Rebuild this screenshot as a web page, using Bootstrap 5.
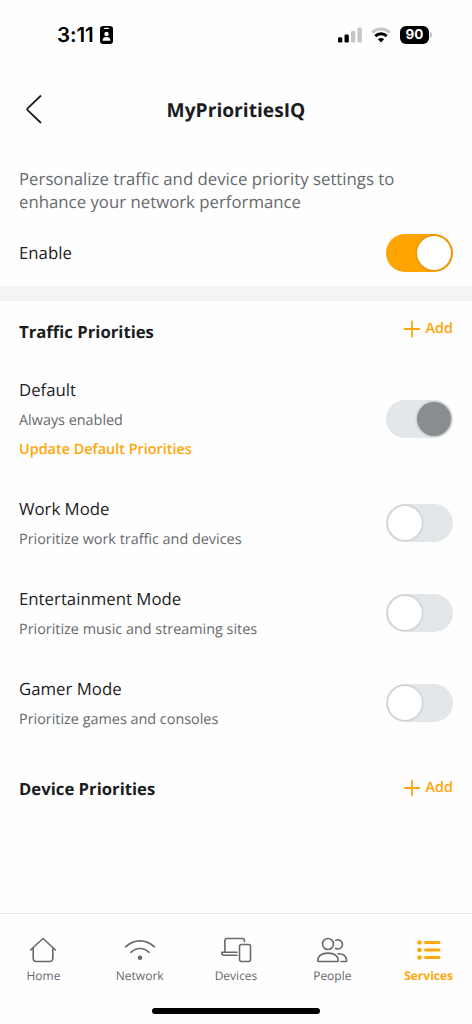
<!DOCTYPE html>
<html lang="en">
<head>
<meta charset="utf-8">
<meta name="viewport" content="width=device-width, initial-scale=1">
<title>MyPrioritiesIQ</title>
<link href="https://cdn.jsdelivr.net/npm/bootstrap@5.3.0/dist/css/bootstrap.min.css" rel="stylesheet">
<style>
  body { font-family: "Open Sans", sans-serif; background: #fefefe; color: #1b1c1e; text-rendering: geometricPrecision; }
  .screen { height: 1024px; overflow: hidden; }
  .status { height: 70px; padding: 0 40px 0 57px; }
  .clock { font: 600 20.5px/24px Inter, sans-serif; color: #000; letter-spacing: -.1px; }
  .id-icon { margin-left: 6px; }
  .battery { width: 29px; height: 18px; border-radius: 6px; background: #000; color: #fff; font: 700 13.5px/18px Inter, sans-serif; }
  .battery-tip { width: 2px; height: 6px; border-radius: 0 2px 2px 0; background: #c6c6c8; margin-left: 1px; }
  .title-bar { height: 78px; display: grid; grid-template-columns: 52px 1fr 52px; }
  .title-bar h1 { font-size: 19.2px; font-weight: 700; line-height: 26px; padding-top: 1px; }
  .intro { padding: 19px 19px 0; font-size: 16.8px; line-height: 23px; color: #66696d; height: 72px; }
  .line { padding: 0 19px; }
  .enable-line { height: 66px; }
  .label-text { font-size: 16.8px; line-height: 24px; }
  .note { font-size: 14.4px; line-height: 20px; color: #66696d; margin-top: 9px; }
  .accent { color: #ffa60a; }
  .update { font-size: 14.4px; line-height: 20px; font-weight: 600; text-decoration: none; margin-top: 9px; }
  .divider { height: 15px; background: #f3f4f6; }
  .section-head { height: 61px; }
  .section-head h2 { font-size: 16.7px; line-height: 24px; font-weight: 700; padding-top: 1px; }
  .add { font-size: 14.4px; line-height: 20px; font-weight: 600; gap: 5px; padding-bottom: 5px; }
  .toggle { appearance: none; width: 67px; height: 38px; border-radius: 19px; background: #e3e7ea; margin: 0; padding: 2px; display: flex; flex: none; }
  .toggle::before { content: ""; width: 34px; height: 34px; border-radius: 50%; background: #fff; box-shadow: 0 0 2px 1px rgba(0,0,0,.14); }
  .toggle:checked { background: #ffa400; justify-content: flex-end; }
  .toggle:disabled { background: #e3e7ea; }
  .toggle:disabled::before { background: #898d8f; }
  .default-item { height: 118px; padding-top: 16px; }
  .default-item .toggle { margin-top: 22px; }
  .mode-item { height: 90px; padding-top: 17px; }
  .mode-item .toggle { margin-top: 7px; }
  .tabs { height: 111px; border-top: 1px solid #e3e4e6; padding: 20px 0 10px; }
  .tab { width: 96.3px; font-size: 12px; line-height: 18px; }
  .tab-muted { color: #66696d; }
  .tab svg { display: block; margin-bottom: 1px; }
  .home-bar { width: 168px; height: 6px; border-radius: 3px; background: #000; }
</style>
</head>
<body>
<div class="screen d-flex flex-column">
  <div class="status d-flex align-items-center justify-content-between">
    <div class="d-flex align-items-center">
      <span class="clock">3:11</span>
      <svg class="id-icon" width="13" height="18" viewBox="0 0 13 18"><rect width="13" height="18" rx="3"/><rect x="4" y="1.7" width="5" height="1.4" rx=".7" fill="#fff"/><circle cx="6.5" cy="8" r="2.2" fill="#fff"/><path d="M2.6 14.7c0-2.8 1.5-3.8 3.9-3.8s3.9 1 3.9 3.8z" fill="#fff"/></svg>
    </div>
    <div class="d-flex align-items-center">
      <svg width="24" height="16" viewBox="0 0 24 16"><rect y="10.3" width="4.3" height="5.2" rx="1.3"/><rect x="6.5" y="7.5" width="4.3" height="8" rx="1.3"/><rect x="13" y="4" width="4.3" height="11.5" rx="1.3" fill="#c6c6c8"/><rect x="19.5" y=".5" width="4.3" height="15" rx="1.3" fill="#c6c6c8"/></svg>
      <svg class="mx-2" width="22" height="16" viewBox="-1 0 22 16" fill="none" stroke-width="2.9"><path d="M1.2 5.6C6.1.7 13.9.7 18.8 5.6" stroke="#c6c6c8"/><path d="M4.3 9.1c3.2-3.1 8.2-3.1 11.4 0" stroke="#000"/><path d="M10 15.4 6.900 12.300c1.800-1.700 4.400-1.700 6.200 0z" fill="#000"/></svg>
      <span class="battery d-flex align-items-center justify-content-center">90</span><span class="battery-tip"></span>
    </div>
  </div>

  <header class="title-bar align-items-center text-center">
    <svg width="52" height="32" viewBox="0 0 52 32" fill="none" stroke="#1b1c1e" stroke-width="1.8" stroke-linecap="round" stroke-linejoin="round"><path d="M40.500 3 27.600 15.300q-.9.9 0 1.800L40.500 29.500"/></svg>
    <h1 class="m-0">MyPrioritiesIQ</h1>
  </header>

  <p class="intro m-0">Personalize traffic and device priority settings to<br>enhance your network performance</p>
  <div class="line enable-line d-flex align-items-center justify-content-between">
    <label class="label-text" for="enable">Enable</label>
    <input class="toggle" id="enable" type="checkbox" role="switch" checked>
  </div>
  <div class="divider"></div>

  <section>
    <div class="line section-head d-flex align-items-center justify-content-between">
      <h2 class="m-0">Traffic Priorities</h2>
      <div class="add accent d-flex align-items-center"><svg width="18" height="18" viewBox="0 0 18 18" fill="none" stroke="currentColor" stroke-width="1.8" stroke-linecap="round"><path d="M9 1.500v15M1.500 9h15"/></svg>Add</div>
    </div>
    <div class="line default-item d-flex justify-content-between">
      <div>
        <div class="label-text">Default</div>
        <div class="note">Always enabled</div>
        <a href="#" class="update accent d-block">Update Default Priorities</a>
      </div>
      <input class="toggle" type="checkbox" role="switch" checked disabled aria-label="Default">
    </div>
    <div class="line mode-item d-flex justify-content-between">
      <div><div class="label-text">Work Mode</div><div class="note">Prioritize work traffic and devices</div></div>
      <input class="toggle" type="checkbox" role="switch" aria-label="Work Mode">
    </div>
    <div class="line mode-item d-flex justify-content-between">
      <div><div class="label-text">Entertainment Mode</div><div class="note">Prioritize music and streaming sites</div></div>
      <input class="toggle" type="checkbox" role="switch" aria-label="Entertainment Mode">
    </div>
    <div class="line mode-item d-flex justify-content-between">
      <div><div class="label-text">Gamer Mode</div><div class="note">Prioritize games and consoles</div></div>
      <input class="toggle" type="checkbox" role="switch" aria-label="Gamer Mode">
    </div>
  </section>
  <section class="pt-2">
    <div class="line section-head d-flex align-items-center justify-content-between pt-1">
      <h2 class="mb-1">Device Priorities</h2>
      <div class="add accent d-flex align-items-center"><svg width="18" height="18" viewBox="0 0 18 18" fill="none" stroke="currentColor" stroke-width="1.8" stroke-linecap="round"><path d="M9 1.500v15M1.500 9h15"/></svg>Add</div>
    </div>
  </section>

  <footer class="tabs mt-auto d-flex flex-column align-items-center">
    <nav class="d-flex justify-content-center w-100">
      <div class="tab tab-muted d-flex flex-column align-items-center flex-shrink-0">
        <svg width="32" height="32" viewBox="0 0 32 32" fill="none" stroke="currentColor" stroke-width="1.6" stroke-linecap="round" stroke-linejoin="round"><path d="M3.500 16 16 4.500 28.500 16M6.200 14v10.500a3 3 0 0 0 3 3h13.600a3 3 0 0 0 3-3V14"/></svg>Home</div>
      <div class="tab tab-muted d-flex flex-column align-items-center flex-shrink-0">
        <svg width="32" height="32" viewBox="0 0 32 32" fill="none" stroke="currentColor" stroke-width="1.6" stroke-linecap="round"><path d="M1.600 12.800C10 4.900 22 4.900 30.400 12.800M7 18.300c5.300-5 12.700-5 18 0"/><circle cx="16" cy="23.700" r="2.300" fill="currentColor" stroke="none"/></svg>Network</div>
      <div class="tab tab-muted d-flex flex-column align-items-center flex-shrink-0">
        <svg width="32" height="32" viewBox="0 0 32 32" fill="none" stroke="currentColor" stroke-width="1.6" stroke-linecap="round" stroke-linejoin="round"><path d="M4.900 18V6.500a2 2 0 0 1 2-2h15.500a2 2 0 0 1 2 2v1.200M17 18.200H1.700q0 3 2.500 3H17"/><rect x="19.500" y="10.500" width="11" height="17" rx="2"/></svg>Devices</div>
      <div class="tab tab-muted d-flex flex-column align-items-center flex-shrink-0">
        <svg width="32" height="32" viewBox="0 0 32 32" fill="none" stroke="currentColor" stroke-width="1.600" stroke-linecap="round" stroke-linejoin="round"><circle cx="12" cy="10" r="5.500"/><path d="M2.500 27.500h19q.8 0 .7-1.200c-.5-5-4.200-7.200-10.200-7.200S2.300 21.300 1.800 26.300q-.1 1.200.7 1.200zM19.500 6.400c3.500-1.700 7 .5 7 4s-3.700 5.800-7 3.900M22 19.800c4.500-.3 8 1.800 8.700 6.300q.1 1.400-.8 1.400H25"/></svg>People</div>
      <div class="tab accent fw-bold d-flex flex-column align-items-center flex-shrink-0">
        <svg width="32" height="32" viewBox="0 0 32 32" fill="currentColor"><circle cx="6.500" cy="8.500" r="2.300"/><circle cx="6.500" cy="16" r="2.300"/><circle cx="6.500" cy="23.500" r="2.300"/><path d="M12.500 8.500h13.500M12.500 16h13.500M12.500 23.500h13.500" stroke="currentColor" stroke-width="3" stroke-linecap="round"/></svg>Services</div>
    </nav>
    <div class="home-bar mt-auto"></div>
  </footer>
</div>
<script src="https://cdn.jsdelivr.net/npm/bootstrap@5.3.0/dist/js/bootstrap.bundle.min.js"></script>
</body>
</html>
